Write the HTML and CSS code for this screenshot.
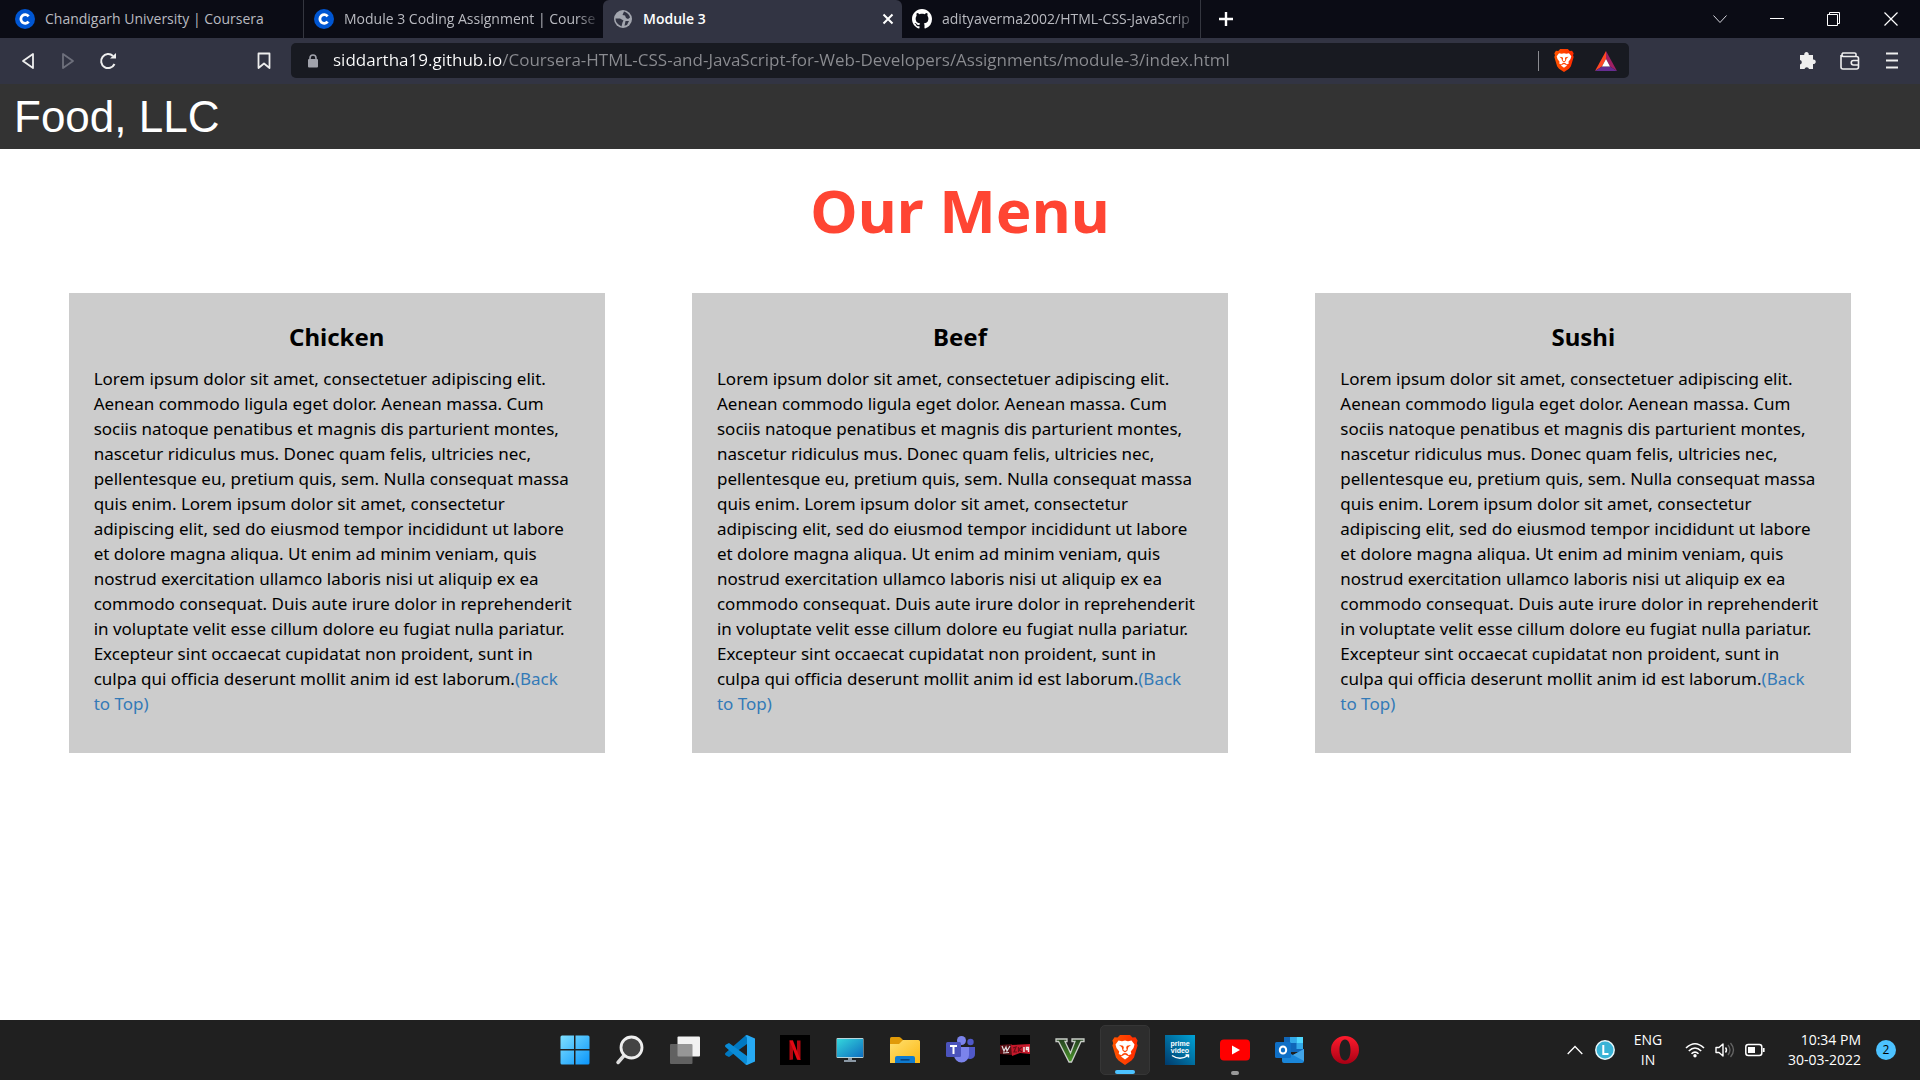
FILE: index.html
```html
<!DOCTYPE html>
<html lang="en">
<head>
<meta charset="utf-8">
<meta name="viewport" content="width=device-width, initial-scale=1">
<title>Module 3</title>
<link rel="stylesheet" href="styles.css">
</head>
<body>
<svg class="defs" aria-hidden="true">
  <defs>
    <linearGradient id="g-brave" x1="0" x2="1"><stop offset="0" stop-color="#ff5500"/><stop offset="1" stop-color="#ff2a00"/></linearGradient>
    <linearGradient id="g-win" x1="0" y1="0" x2="1" y2="1"><stop offset="0" stop-color="#7fe0ff"/><stop offset="1" stop-color="#0a95fb"/></linearGradient>
    <linearGradient id="g-screen" x1="0" y1="0" x2="1" y2="1"><stop offset="0" stop-color="#33d6dc"/><stop offset="1" stop-color="#0f6ec0"/></linearGradient>
    <linearGradient id="g-folder" x1="0" y1="0" x2="1" y2="1"><stop offset="0" stop-color="#ffe070"/><stop offset="1" stop-color="#fcb813"/></linearGradient>
    <linearGradient id="g-prime" x1="0" y1="1" x2="1" y2="0"><stop offset="0" stop-color="#003a6b"/><stop offset="1" stop-color="#00a3d6"/></linearGradient>
    <linearGradient id="g-opera" x1="0" y1="0" x2="0" y2="1"><stop offset="0" stop-color="#ff1b2d"/><stop offset="1" stop-color="#a70014"/></linearGradient>
    <linearGradient id="g-gta" x1="0" y1="0" x2="0" y2="1"><stop offset="0" stop-color="#24401f"/><stop offset="1" stop-color="#4c9a2c"/></linearGradient>
    <symbol id="coursera" viewBox="0 0 20 20"><circle cx="10" cy="10" r="10" fill="#0056d2"/><path d="M13.6 7.4A4.3 4.3 0 1 0 13.6 12.6" fill="none" stroke="#fff" stroke-width="2.8"/></symbol>
    <symbol id="brave" viewBox="0 0 26 30">
      <path d="M8 0H18L20.500 2.600 23.500 2.200 25.600 5.600 24.800 8.200 25.600 10.500 22 22.500 19.500 25.600 13 30 6.500 25.600 4 22.500 .4 10.500 1.200 8.200 .4 5.600 2.500 2.200 5.500 2.600Z" fill="url(#g-brave)"/>
      <path d="M6.500 5.500 10 6.200 13 5.600 16 6.200 19.500 5.500 22.500 9.500 21.500 13 18.800 16.600 19.300 19 16.600 20.200 15 18.600 13 18 11 18.600 9.400 20.200 6.700 19 7.200 16.600 4.500 13 3.500 9.500ZM13 19.500 17 21.600 13 24.500 9 21.600Z" fill="#fff"/>
      <path d="M7 10 11 10.800 11.800 12.200 11.300 15 13 16 14.700 15 14.200 12.200 15 10.800 19 10 16.300 12.300 15.400 15.800 13 17.600 10.600 15.800 9.700 12.300Z" fill="#ff4400"/>
    </symbol>
  </defs>
</svg>

<header class="browser">
  <div class="tabstrip">
    <div class="tabs" role="tablist">
      <button class="tab" role="tab"><svg class="fav"><use href="#coursera"/></svg><span class="label">Chandigarh University | Coursera</span></button>
      <button class="tab" role="tab"><svg class="fav"><use href="#coursera"/></svg><span class="label faded">Module 3 Coding Assignment | Course</span></button>
      <button class="tab active" role="tab" aria-selected="true">
        <svg class="fav" viewBox="0 0 20 20"><circle cx="10" cy="10" r="9" fill="#a3a6af"/><path d="M11 2.500C13 3 16.500 5 17 8.500L15 10 13 9 12 6.500 9.500 6ZM2.500 9.500 7 9.500 10.500 11.500 9.500 13.500 8.500 17.500 5.500 15.500C3.500 14 2.500 12 2.500 9.500ZM12.500 12 16 12 14 16 11.500 16.800Z" fill="#323443"/></svg>
        <span class="label">Module 3</span>
        <svg class="tab-close" viewBox="0 0 12 12"><path d="M1.500 1.500 10.500 10.500M10.500 1.500 1.500 10.500" stroke="#fff" stroke-width="2"/></svg>
      </button>
      <button class="tab" role="tab"><svg class="fav" viewBox="0 0 16 16"><path fill="#fff" d="M8 0C3.580 0 0 3.580 0 8c0 3.540 2.290 6.530 5.470 7.590.4.070.55-.17.55-.38 0-.19-.01-.82-.01-1.490-2.010.37-2.530-.49-2.690-.94-.09-.23-.48-.94-.82-1.130-.28-.15-.68-.52-.01-.53.63-.01 1.080.58 1.230.82.72 1.210 1.870.87 2.330.66.07-.52.28-.87.51-1.070-1.780-.2-3.640-.89-3.640-3.950 0-.87.31-1.590.82-2.150-.08-.2-.36-1.020.08-2.120 0 0 .67-.21 2.200.82.64-.18 1.320-.27 2-.27s1.360.09 2 .27c1.530-1.040 2.200-.82 2.200-.82.44 1.100.16 1.920.08 2.120.51.56.82 1.270.82 2.150 0 3.070-1.870 3.750-3.650 3.950.29.25.54.73.54 1.480 0 1.070-.01 1.930-.01 2.200 0 .21.15.46.55.38A8.010 8.010 0 0 0 16 8c0-4.420-3.580-8-8-8z"/></svg><span class="label faded">adityaverma2002/HTML-CSS-JavaScrip</span></button>
      <button class="new-tab" aria-label="New tab"><svg width="16" height="16" viewBox="0 0 16 16"><path d="M8 1V15M1 8H15" stroke="#fff" stroke-width="2.400"/></svg></button>
    </div>
    <div class="window-buttons">
      <button aria-label="Search tabs"><svg width="14" height="14" viewBox="0 0 14 14"><path d="M.5 3.500 7 10.500 13.500 3.500" fill="none" stroke="#d5d6dc"/></svg></button>
      <button aria-label="Minimize"><svg width="14" height="14" viewBox="0 0 14 14"><path d="M0 6.500H14" stroke="#fff"/></svg></button>
      <button aria-label="Restore"><svg width="14" height="14" viewBox="0 0 14 14"><path d="M.5 2.500H10.500V13.500H.5ZM2.500 2.500V.5H12.500V11.500H10.500" fill="none" stroke="#fff"/></svg></button>
      <button aria-label="Close"><svg width="14" height="14" viewBox="0 0 14 14"><path d="M.5 .5 13.500 13.500M13.500 .5 .5 13.500" stroke="#fff" stroke-width="1.200"/></svg></button>
    </div>
  </div>
  <div class="toolbar">
    <div class="nav">
      <button aria-label="Back"><svg width="14" height="18" viewBox="0 0 14 18"><path d="M12 2V16L2 9Z" fill="none" stroke="#eee" stroke-width="1.800" stroke-linejoin="round"/></svg></button>
      <button aria-label="Forward"><svg width="14" height="18" viewBox="0 0 14 18"><path d="M2 2V16L12 9Z" fill="none" stroke="#6e707c" stroke-width="1.800" stroke-linejoin="round"/></svg></button>
      <button aria-label="Reload"><svg width="18" height="18" viewBox="0 0 18 18"><path d="M15.500 12A7 7 0 1 1 14 4" fill="none" stroke="#eee" stroke-width="2"/><path d="M11 6.500H17V1Z" fill="#eee"/></svg></button>
    </div>
    <button class="bookmark" aria-label="Bookmark this tab"><svg width="14" height="18" viewBox="0 0 14 18"><path d="M1.500 1.500H12.500V16L7 11.500 1.500 16Z" fill="none" stroke="#eee" stroke-width="1.800" stroke-linejoin="round"/></svg></button>
    <div class="address">
      <svg width="12" height="14" viewBox="0 0 12 14"><path d="M3 6V4A3 3 0 0 1 9 4V6" fill="none" stroke="#a0a2ab" stroke-width="1.600"/><rect x="1" y="5" width="10" height="8.500" rx="1" fill="#a0a2ab"/></svg>
      <input class="url" type="text" aria-label="Address" value="siddartha19.github.io/Coursera-HTML-CSS-and-JavaScript-for-Web-Developers/Assignments/module-3/index.html">
      <div class="shields">
        <button aria-label="Brave Shields"><svg width="20" height="23"><use href="#brave"/></svg></button>
        <button aria-label="Brave Rewards"><svg width="22" height="20" viewBox="0 0 22 20"><path d="M11 0 0 20 7 15.500 11 8Z" fill="#ff4724"/><path d="M11 0 22 20 15 15.500 11 8Z" fill="#9e1f63"/><path d="M0 20H22L15 15.500H7Z" fill="#662d91"/><path d="M11 8 15 15.500H7Z" fill="#fff"/></svg></button>
      </div>
    </div>
    <div class="extensions">
      <button aria-label="Extensions"><svg width="18" height="19" viewBox="0 0 18 19"><path d="M1 4H5.300A2.300 2.300 0 1 1 9.700 4H14V8.500A2.300 2.300 0 1 1 14 13V18H10A2.300 2.300 0 0 0 5.500 18H1V13.500A2.300 2.300 0 0 0 1 9Z" fill="#eee"/></svg></button>
      <button aria-label="Wallet"><svg width="20" height="18" viewBox="0 0 20 18"><path d="M16 4V2Q16 1 14.500 1H3A2 2 0 0 0 3 4.500H16.500A2 2 0 0 1 18.500 6.500V15A2 2 0 0 1 16.500 17H3A2 2 0 0 1 1 15V3M18.500 8.500H13.500A2 2 0 0 0 13.500 13H18.500" fill="none" stroke="#eee" stroke-width="1.600"/></svg></button>
      <button aria-label="Menu"><svg width="12" height="17" viewBox="0 0 12 17"><path d="M0 1.500H12M0 8.500H12M0 15.500H12" stroke="#eee" stroke-width="1.800"/></svg></button>
    </div>
  </div>
</header>

<nav class="site-nav"><a class="brand" href="#top">Food, LLC</a></nav>
<main class="page" id="top">
  <h1>Our Menu</h1>
  <div class="menu">
    <section class="card">
      <h2>Chicken</h2>
      <p>Lorem ipsum dolor sit amet, consectetuer adipiscing elit.<br>Aenean commodo ligula eget dolor. Aenean massa. Cum<br>sociis natoque penatibus et magnis dis parturient montes,<br>nascetur ridiculus mus. Donec quam felis, ultricies nec,<br>pellentesque eu, pretium quis, sem. Nulla consequat massa<br>quis enim. Lorem ipsum dolor sit amet, consectetur<br>adipiscing elit, sed do eiusmod tempor incididunt ut labore<br>et dolore magna aliqua. Ut enim ad minim veniam, quis<br>nostrud exercitation ullamco laboris nisi ut aliquip ex ea<br>commodo consequat. Duis aute irure dolor in reprehenderit<br>in voluptate velit esse cillum dolore eu fugiat nulla pariatur.<br>Excepteur sint occaecat cupidatat non proident, sunt in<br>culpa qui officia deserunt mollit anim id est laborum.<a href="#top">(Back<br>to Top)</a></p>
    </section>
    <section class="card">
      <h2>Beef</h2>
      <p>Lorem ipsum dolor sit amet, consectetuer adipiscing elit.<br>Aenean commodo ligula eget dolor. Aenean massa. Cum<br>sociis natoque penatibus et magnis dis parturient montes,<br>nascetur ridiculus mus. Donec quam felis, ultricies nec,<br>pellentesque eu, pretium quis, sem. Nulla consequat massa<br>quis enim. Lorem ipsum dolor sit amet, consectetur<br>adipiscing elit, sed do eiusmod tempor incididunt ut labore<br>et dolore magna aliqua. Ut enim ad minim veniam, quis<br>nostrud exercitation ullamco laboris nisi ut aliquip ex ea<br>commodo consequat. Duis aute irure dolor in reprehenderit<br>in voluptate velit esse cillum dolore eu fugiat nulla pariatur.<br>Excepteur sint occaecat cupidatat non proident, sunt in<br>culpa qui officia deserunt mollit anim id est laborum.<a href="#top">(Back<br>to Top)</a></p>
    </section>
    <section class="card">
      <h2>Sushi</h2>
      <p>Lorem ipsum dolor sit amet, consectetuer adipiscing elit.<br>Aenean commodo ligula eget dolor. Aenean massa. Cum<br>sociis natoque penatibus et magnis dis parturient montes,<br>nascetur ridiculus mus. Donec quam felis, ultricies nec,<br>pellentesque eu, pretium quis, sem. Nulla consequat massa<br>quis enim. Lorem ipsum dolor sit amet, consectetur<br>adipiscing elit, sed do eiusmod tempor incididunt ut labore<br>et dolore magna aliqua. Ut enim ad minim veniam, quis<br>nostrud exercitation ullamco laboris nisi ut aliquip ex ea<br>commodo consequat. Duis aute irure dolor in reprehenderit<br>in voluptate velit esse cillum dolore eu fugiat nulla pariatur.<br>Excepteur sint occaecat cupidatat non proident, sunt in<br>culpa qui officia deserunt mollit anim id est laborum.<a href="#top">(Back<br>to Top)</a></p>
    </section>
  </div>
</main>

<footer class="taskbar">
  <div class="apps">
    <button aria-label="Start"><svg viewBox="0 0 30 30"><path d="M2 .5H14V14H.5V2Q.5 .5 2 .5ZM15.500 .5H28Q29.500 .5 29.500 2V14H15.500ZM.5 15.500H14V29.500H2Q.5 29.500 .5 28ZM15.500 15.500H29.500V28Q29.500 29.500 28 29.500H15.500Z" fill="url(#g-win)"/></svg></button>
    <button aria-label="Search"><svg viewBox="0 0 30 30"><path d="M9.500 20 3 27.500" stroke="#ddd" stroke-width="3.500" stroke-linecap="round"/><circle cx="16.500" cy="12.500" r="10.500" fill="#444" stroke="#eee" stroke-width="2.800"/></svg></button>
    <button aria-label="Task view"><svg viewBox="0 0 30 30"><rect x="7.500" y="1.500" width="22.500" height="20" rx="1" fill="#f2f2f2"/><rect x="0" y="9" width="22.500" height="20" rx="1" fill="#777" fill-opacity=".75"/></svg></button>
    <button aria-label="Visual Studio Code"><svg viewBox="0 0 30 30"><path d="M22 0V9L4 22 1 20.500Q-1 19 1 17.500L20 1Z" fill="#0078c1"/><path d="M22 30V21L4 8 1 9.500Q-1 11 1 12.500L20 29Z" fill="#0a8bd6"/><path d="M22 0 30 3.500V26.500L22 30 20 29Q22 29 22 26V4Q22 1 20 1Z" fill="#27a9f3"/></svg></button>
    <button aria-label="Netflix"><svg viewBox="0 0 30 30"><path d="M0 0H30V30H0Z"/><path d="M9.500 5.500H13V24.500L9.500 25ZM17 5.500H20.500V25L17 24.500Z" fill="#b1060f"/><path d="M9.500 5.500H13L20.500 25 17 24.500Z" fill="#e50914"/></svg></button>
    <button aria-label="This PC"><svg viewBox="0 0 30 30"><path d="M13 22H17V25H21V27H9V25H13Z" fill="#8b98a4"/><rect x="1.500" y="3" width="27" height="20" rx="1" fill="#b8d5dc"/><path d="M2 4H28V22H2Z" fill="url(#g-screen)"/></svg></button>
    <button aria-label="File Explorer"><svg viewBox="0 0 30 30"><path d="M0 9V3.500Q0 2 1.500 2H9Q10 2 11 3L13 5V9Z" fill="#e09a08"/><path d="M0 9H9L13 5H28.500Q30 5 30 6.500V28H0Z" fill="url(#g-folder)"/><path d="M5 28V23Q5 21 7 21H23Q25 21 25 23V28Z" fill="#0f7bd0"/><path d="M10.500 24.800H19.500" stroke="#07437e" stroke-width="1.600"/></svg></button>
    <button aria-label="Microsoft Teams"><svg viewBox="0 0 30 30"><circle cx="25.500" cy="7" r="3.200" fill="#5059c9"/><circle cx="16.500" cy="5.500" r="4.500" fill="#7b83eb"/><path d="M21 12H30V19A5 5 0 0 1 21 22Z" fill="#5059c9"/><path d="M9 12H24V20A7.500 7.500 0 0 1 9 20Z" fill="#7b83eb"/><rect x="1" y="7" width="15" height="15" rx="1.500" fill="#4b53bc"/><path d="M5 11H12M8.500 11V19" stroke="#fff" stroke-width="2"/></svg></button>
    <button aria-label="WWE 2K19"><svg viewBox="0 0 30 30"><path d="M0 0H30V30H0Z"/><path d="M0 10 12 9V20L0 19Z" fill="#5a1015"/><path d="M11 10 30 9V19L20 18 12 21Z" fill="#c4182a"/><path d="M2 11 4 16 6 12 7 16 10 11M3 18 9 17.500" fill="none" stroke="#ddd" stroke-width="1.200"/><path d="M13 13 16 12 14 17H17M18.500 12V17M22 12 19 14.500 22 17" fill="none" stroke="#6b0d16" stroke-width="1.200"/><path d="M24 12V17M28.500 17V12.500H26.500V14.500H28.500" fill="none" stroke="#eee" stroke-width="1.400"/></svg></button>
    <button aria-label="Grand Theft Auto V"><svg viewBox="0 0 30 30"><path d="M1 4H12V6.500H10L15.500 18 20 6.500H17V4H29V6.500H26L16.500 27H14L3.500 6.500H1Z" fill="url(#g-gta)" stroke="#c9cec8" stroke-width="1.300"/></svg></button>
    <button class="current" aria-label="Brave"><svg viewBox="0 0 30 30"><use href="#brave" x="2" y="0" width="26" height="30"/></svg></button>
    <button aria-label="Prime Video"><svg viewBox="0 0 30 30"><path d="M0 0H30V30H0Z" fill="url(#g-prime)"/><text class="prime" x="15" y="11" text-anchor="middle">prime</text><text class="prime" x="15" y="18" text-anchor="middle">video</text><path d="M7 20.500Q15 26 23 20.500M20.500 20H23.500V22.500" fill="none" stroke="#fff" stroke-width="1.400"/></svg></button>
    <button class="running" aria-label="YouTube"><svg viewBox="0 0 30 30"><rect y="4.500" width="30" height="21" rx="4" fill="#f00"/><path d="M12 10.500V19.500L20 15Z" fill="#fff"/></svg></button>
    <button aria-label="Outlook"><svg viewBox="0 0 30 30"><path d="M9 2H28V17H9Z" fill="#1066b8"/><path d="M15 2H21.500V8H15ZM21.500 8H28V14H21.500Z" fill="#33a9e8"/><path d="M21.500 2H28V8H21.500Z" fill="#50d9ff"/><path d="M7 14 18 20 29 14V26Q29 28 27 28H9Q7 28 7 26Z" fill="#1a86d9"/><path d="M29 14V26L18 20Z" fill="#42a5e8"/><rect y="7" width="16" height="16" rx="1.500" fill="#0f6fc6"/><ellipse cx="8" cy="15" rx="3.200" ry="3.500" fill="none" stroke="#fff" stroke-width="2"/></svg></button>
    <button aria-label="Opera"><svg viewBox="0 0 30 30"><path fill-rule="evenodd" d="M15 1A14 14 0 1 1 15 29 14 14 0 1 1 15 1ZM15 4.500C11 4.500 9.500 10 9.500 15S11 25.500 15 25.500 20.500 20 20.500 15 19 4.500 15 4.500Z" fill="url(#g-opera)"/></svg></button>
  </div>
  <div class="tray">
    <button aria-label="Show hidden icons"><svg width="16" height="10" viewBox="0 0 16 10"><path d="M.7 9 8 1.500 15.300 9" fill="none" stroke="#fff" stroke-width="1.300"/></svg></button>
    <svg class="l-app" width="20" height="20" viewBox="0 0 20 20"><circle cx="10" cy="10" r="9.200" fill="#39b3d6" stroke="#e8f7fb" stroke-width="1.500"/><path d="M8.300 5V14H13.500" fill="none" stroke="#fff" stroke-width="2"/></svg>
    <button class="lang">ENG<br>IN</button>
    <div class="status">
      <svg width="20" height="16" viewBox="0 0 20 16"><path d="M1 6Q10-2.500 19 6M3.800 9Q10 3 16.200 9M6.500 11.800Q10 8.300 13.500 11.800" fill="none" stroke="#fff" stroke-width="1.600"/><circle cx="10" cy="13.700" r="1.700" fill="#fff"/></svg>
      <svg width="20" height="16" viewBox="0 0 20 16"><path d="M1 5.500H4L8 2V14L4 10.500H1Z" fill="none" stroke="#fff" stroke-width="1.400" stroke-linejoin="round"/><path d="M10.500 5.500Q12.500 8 10.500 10.500" fill="none" stroke="#fff" stroke-width="1.400"/><path d="M13 3Q17 8 13 13M15.500 1Q21.500 8 15.500 15" fill="none" stroke="#666" stroke-width="1.300"/></svg>
      <svg width="20" height="14" viewBox="0 0 20 14"><rect x=".8" y="1.500" width="16" height="11" rx="2.500" fill="none" stroke="#fff" stroke-width="1.500"/><rect x="3" y="4" width="7" height="6" fill="#fff"/><path d="M18.700 5V9" stroke="#fff" stroke-width="1.800"/></svg>
    </div>
    <button class="clock">10:34 PM<br>30-03-2022</button>
    <span class="badge">2</span>
  </div>
</footer>
</body>
</html>
```

FILE: styles.css
```css
* { box-sizing: border-box; }
body {
  margin: 0;
  min-height: 100vh;
  display: flex;
  flex-direction: column;
  background: #fff;
  font-family: "Open Sans", sans-serif;
}
button {
  display: flex;
  align-items: center;
  justify-content: center;
  margin: 0;
  padding: 0;
  border: 0;
  background: none;
  color: inherit;
  font: inherit;
}
svg { display: block; flex: none; }
.defs { position: absolute; width: 0; height: 0; }

/* Browser window */
.tabstrip {
  display: flex;
  justify-content: space-between;
  height: 38px;
  background: #0b0c15;
}
.tabs { display: flex; padding-left: 5px; }
.tab {
  width: 299px;
  padding: 0 2px 0 10px;
  gap: 10px;
  justify-content: flex-start;
  border-right: 1px solid #34363f;
  color: #b9bac0;
  font-size: 14px;
}
.tab:has(+ .active) { border-right: 0; }
.fav { width: 20px; height: 20px; }
.label {
  flex: 1;
  padding-bottom: 2px;
  text-align: left;
  white-space: nowrap;
}
.faded { mask-image: linear-gradient(to left, transparent, #000 24px); }
.active {
  padding-right: 8px;
  border-right: 0;
  border-radius: 6px 6px 0 0;
  background: #323443;
  color: #fff;
  font-weight: 600;
}
.tab-close { width: 12px; height: 12px; }
.new-tab { width: 50px; }
.window-buttons { display: flex; padding-right: 1px; }
.window-buttons button { width: 57px; }

.toolbar {
  display: flex;
  align-items: center;
  height: 46px;
  padding-bottom: 1px;
  background: #323443;
}
.nav { display: flex; padding-left: 8px; }
.nav button { width: 40px; }
.bookmark { width: 40px; margin: 0 7px 0 116px; }
.address {
  flex: 1;
  display: flex;
  align-items: center;
  height: 35px;
  padding-left: 16px;
  gap: 14px;
  border-radius: 5px;
  background: #181a21;
}
.url {
  flex: 1;
  min-width: 0;
  padding: 0 0 2px;
  border: 0;
  outline: 0;
  font: 17px "Open Sans", sans-serif;
  background: linear-gradient(to right, #fff 169px, #8b8c91 169px);
  background-clip: text;
  -webkit-text-fill-color: transparent;
}
.shields {
  display: flex;
  height: 20px;
  align-items: center;
  padding: 0 2px 0 4px;
  border-left: 1px solid #8b8c91;
}
.shields button { width: 42px; }
.extensions { display: flex; padding: 0 7px 0 158px; }
.extensions button { width: 42px; }

/* Restaurant page */
.site-nav {
  display: flex;
  align-items: center;
  height: 65px;
  padding: 0 14px;
  background: #333;
}
.brand {
  color: #fff;
  font: 44px "Liberation Sans", Arial, sans-serif;
  text-decoration: none;
}
.page {
  flex: 1;
  padding: 0 25px;
  font-family: "Comic Sans MS", "Noto Sans", sans-serif;
}
h1 {
  margin: 16px 0 38px;
  color: #ff4533;
  font-size: 60px;
  line-height: 90px;
  text-align: center;
}
.menu { display: grid; grid-template-columns: repeat(3, 1fr); }
.card {
  margin: 0 7%;
  padding: 25px 25px 37px;
  background: #ccc;
  color: #000;
}
h2 {
  margin: 0 0 10px;
  font-size: 24px;
  line-height: 38px;
  text-align: center;
}
p { margin: 0; font-size: 17px; line-height: 25px; white-space: nowrap; }
p a { color: #337ab7; text-decoration: none; }

/* Desktop taskbar */
.taskbar {
  display: grid;
  grid-template-columns: 1fr auto 1fr;
  align-items: center;
  height: 60px;
  background: #202020;
  color: #fff;
}
.apps { grid-column: 2; display: flex; gap: 5px; }
.apps button { position: relative; width: 50px; height: 50px; }
.apps svg { width: 30px; height: 30px; }
.apps .current { border: 1px solid #363636; border-radius: 5px; background: #2d2d2d; }
.current::after, .running::after {
  content: "";
  position: absolute;
  bottom: 0;
  width: 20px;
  height: 4px;
  border-radius: 2px;
  background: #4cc2ff;
}
.running::after { width: 8px; background: #999; }
.prime { fill: #fff; font: 700 7px "Liberation Sans", Arial, sans-serif; }
.tray {
  display: flex;
  align-items: center;
  justify-content: flex-end;
  padding-right: 24px;
  font-size: 14px;
  line-height: 20px;
}
.l-app { margin-left: 12px; }
.lang { width: 40px; margin: 0 17px 0 13px; text-align: center; }
.status { display: flex; align-items: center; gap: 10px; }
.clock { width: 96px; justify-content: flex-end; text-align: right; }
.badge {
  width: 20px;
  height: 20px;
  margin-left: 15px;
  border-radius: 10px;
  background: #4cc2ff;
  color: #000;
  font-size: 12px;
  text-align: center;
}
```
